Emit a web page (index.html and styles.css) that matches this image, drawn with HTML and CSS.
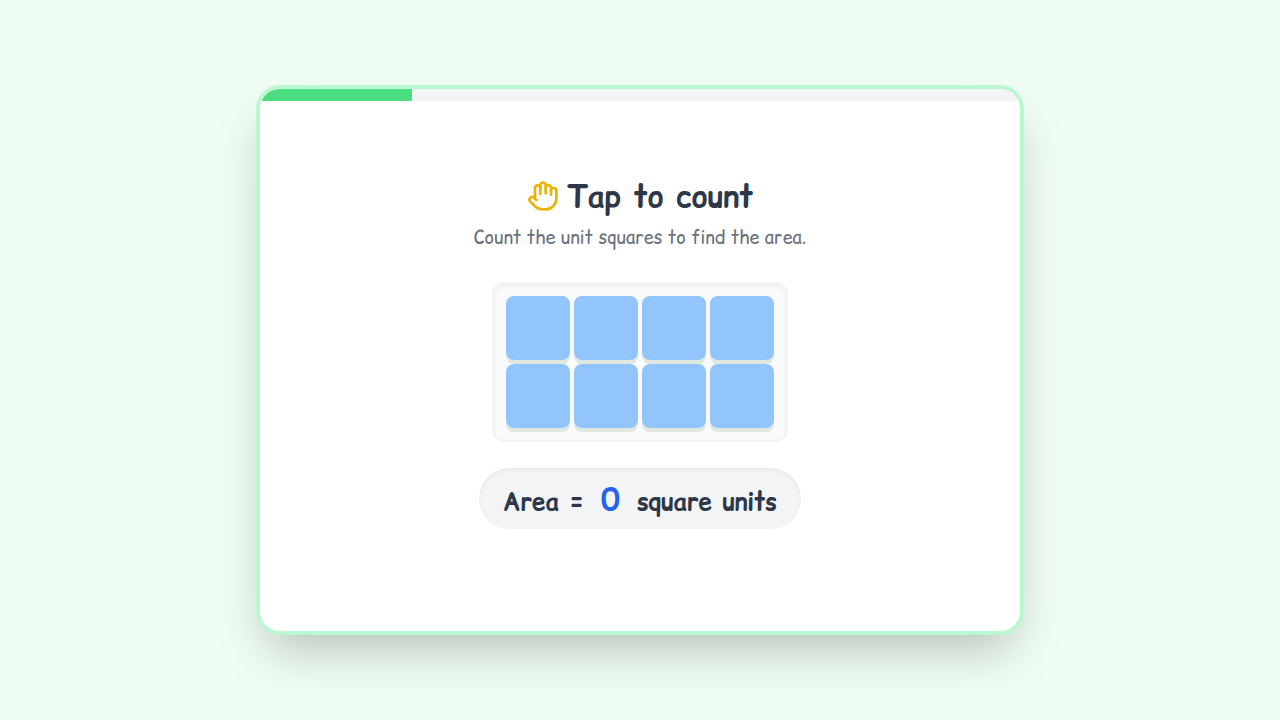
FILE: index.html
```html
<!DOCTYPE html>
<html lang="en">
<head>
    <meta charset="UTF-8">
    <meta name="viewport" content="width=device-width, initial-scale=1.0">
    <title>Area Counting</title>
    <link rel="stylesheet" href="styles.css">
</head>
<body>
    <main class="card">
        <div class="progress">
            <div class="progress-fill" style="width: 20%"></div>
        </div>

        <div class="content">
            <h1 class="title">
                <svg class="hand-icon" viewBox="0 0 24 24" aria-hidden="true">
                    <path d="M18 11V6a2 2 0 0 0-2-2a2 2 0 0 0-2 2"/>
                    <path d="M14 10V4a2 2 0 0 0-2-2a2 2 0 0 0-2 2v2"/>
                    <path d="M10 10.5V6a2 2 0 0 0-2-2a2 2 0 0 0-2 2v8"/>
                    <path d="M18 8a2 2 0 1 1 4 0v6a8 8 0 0 1-8 8h-2c-2.8 0-4.5-.86-5.99-2.34l-3.6-3.6a2 2 0 0 1 2.83-2.82L7 15"/>
                </svg>
                Tap to count
            </h1>
            <p class="subtitle">Count the unit squares to find the area.</p>

            <div class="grid">
                <button class="square" type="button" aria-label="Square 1"></button>
                <button class="square" type="button" aria-label="Square 2"></button>
                <button class="square" type="button" aria-label="Square 3"></button>
                <button class="square" type="button" aria-label="Square 4"></button>
                <button class="square" type="button" aria-label="Square 5"></button>
                <button class="square" type="button" aria-label="Square 6"></button>
                <button class="square" type="button" aria-label="Square 7"></button>
                <button class="square" type="button" aria-label="Square 8"></button>
            </div>

            <div class="result">
                Area = <span class="count">0</span> square units
            </div>
        </div>
    </main>
</body>
</html>
```
FILE: styles.css
```css
* {
    box-sizing: border-box;
}
body {
    margin: 0;
    min-height: 100vh;
    padding: 16px;
    display: flex;
    align-items: center;
    justify-content: center;
    background-color: #f0fdf4;
    font-family: "Comic Sans MS", "Comic Relief", "Comic Neue", cursive;
}
.card {
    display: flex;
    flex-direction: column;
    width: 100%;
    max-width: 768px;
    min-height: 550px;
    background: white;
    border: 4px solid #bbf7d0;
    border-radius: 24px;
    box-shadow: 0 25px 50px -12px rgba(0,0,0,0.25);
    overflow: hidden;
}
.progress {
    height: 12px;
    background: #f3f4f6;
}
.progress-fill {
    height: 100%;
    background: #4ade80;
}
.content {
    flex: 1;
    display: flex;
    flex-direction: column;
    align-items: center;
    justify-content: center;
    padding: 32px;
}
.title {
    display: flex;
    align-items: center;
    gap: 8px;
    margin: 0 0 10px;
    font-size: 30px;
    line-height: 36px;
    font-weight: bold;
    color: #2d3748;
}
.hand-icon {
    width: 32px;
    height: 32px;
    fill: none;
    stroke: #eab308;
    stroke-width: 2;
    stroke-linecap: round;
    stroke-linejoin: round;
}
.subtitle {
    margin: 0 0 30px;
    font-size: 18px;
    line-height: 28px;
    color: #6b7280;
}
.grid {
    display: grid;
    grid-template-columns: repeat(4, 64px);
    gap: 4px;
    margin-bottom: 26px;
    padding: 12px;
    background: #f9fafb;
    border: 2px solid #f3f4f6;
    border-radius: 12px;
    box-shadow: inset 0 2px 4px rgba(0,0,0,0.05);
}
.square {
    height: 64px;
    padding: 0;
    border: none;
    border-radius: 8px;
    background: #93c5fd;
    box-shadow: 0 4px 0 #dfe8e0;
    cursor: pointer;
}
.result {
    margin-bottom: 25px;
    padding: 16px 24px 9px;
    border-radius: 9999px;
    background: #f3f4f6;
    box-shadow: inset 0 2px 4px rgba(0,0,0,0.05);
    font-size: 24px;
    line-height: 36px;
    font-weight: bold;
    color: #2d3748;
}
.count {
    margin: 0 7px;
    font-size: 30px;
    line-height: 30px;
    color: #2563eb;
}
```
